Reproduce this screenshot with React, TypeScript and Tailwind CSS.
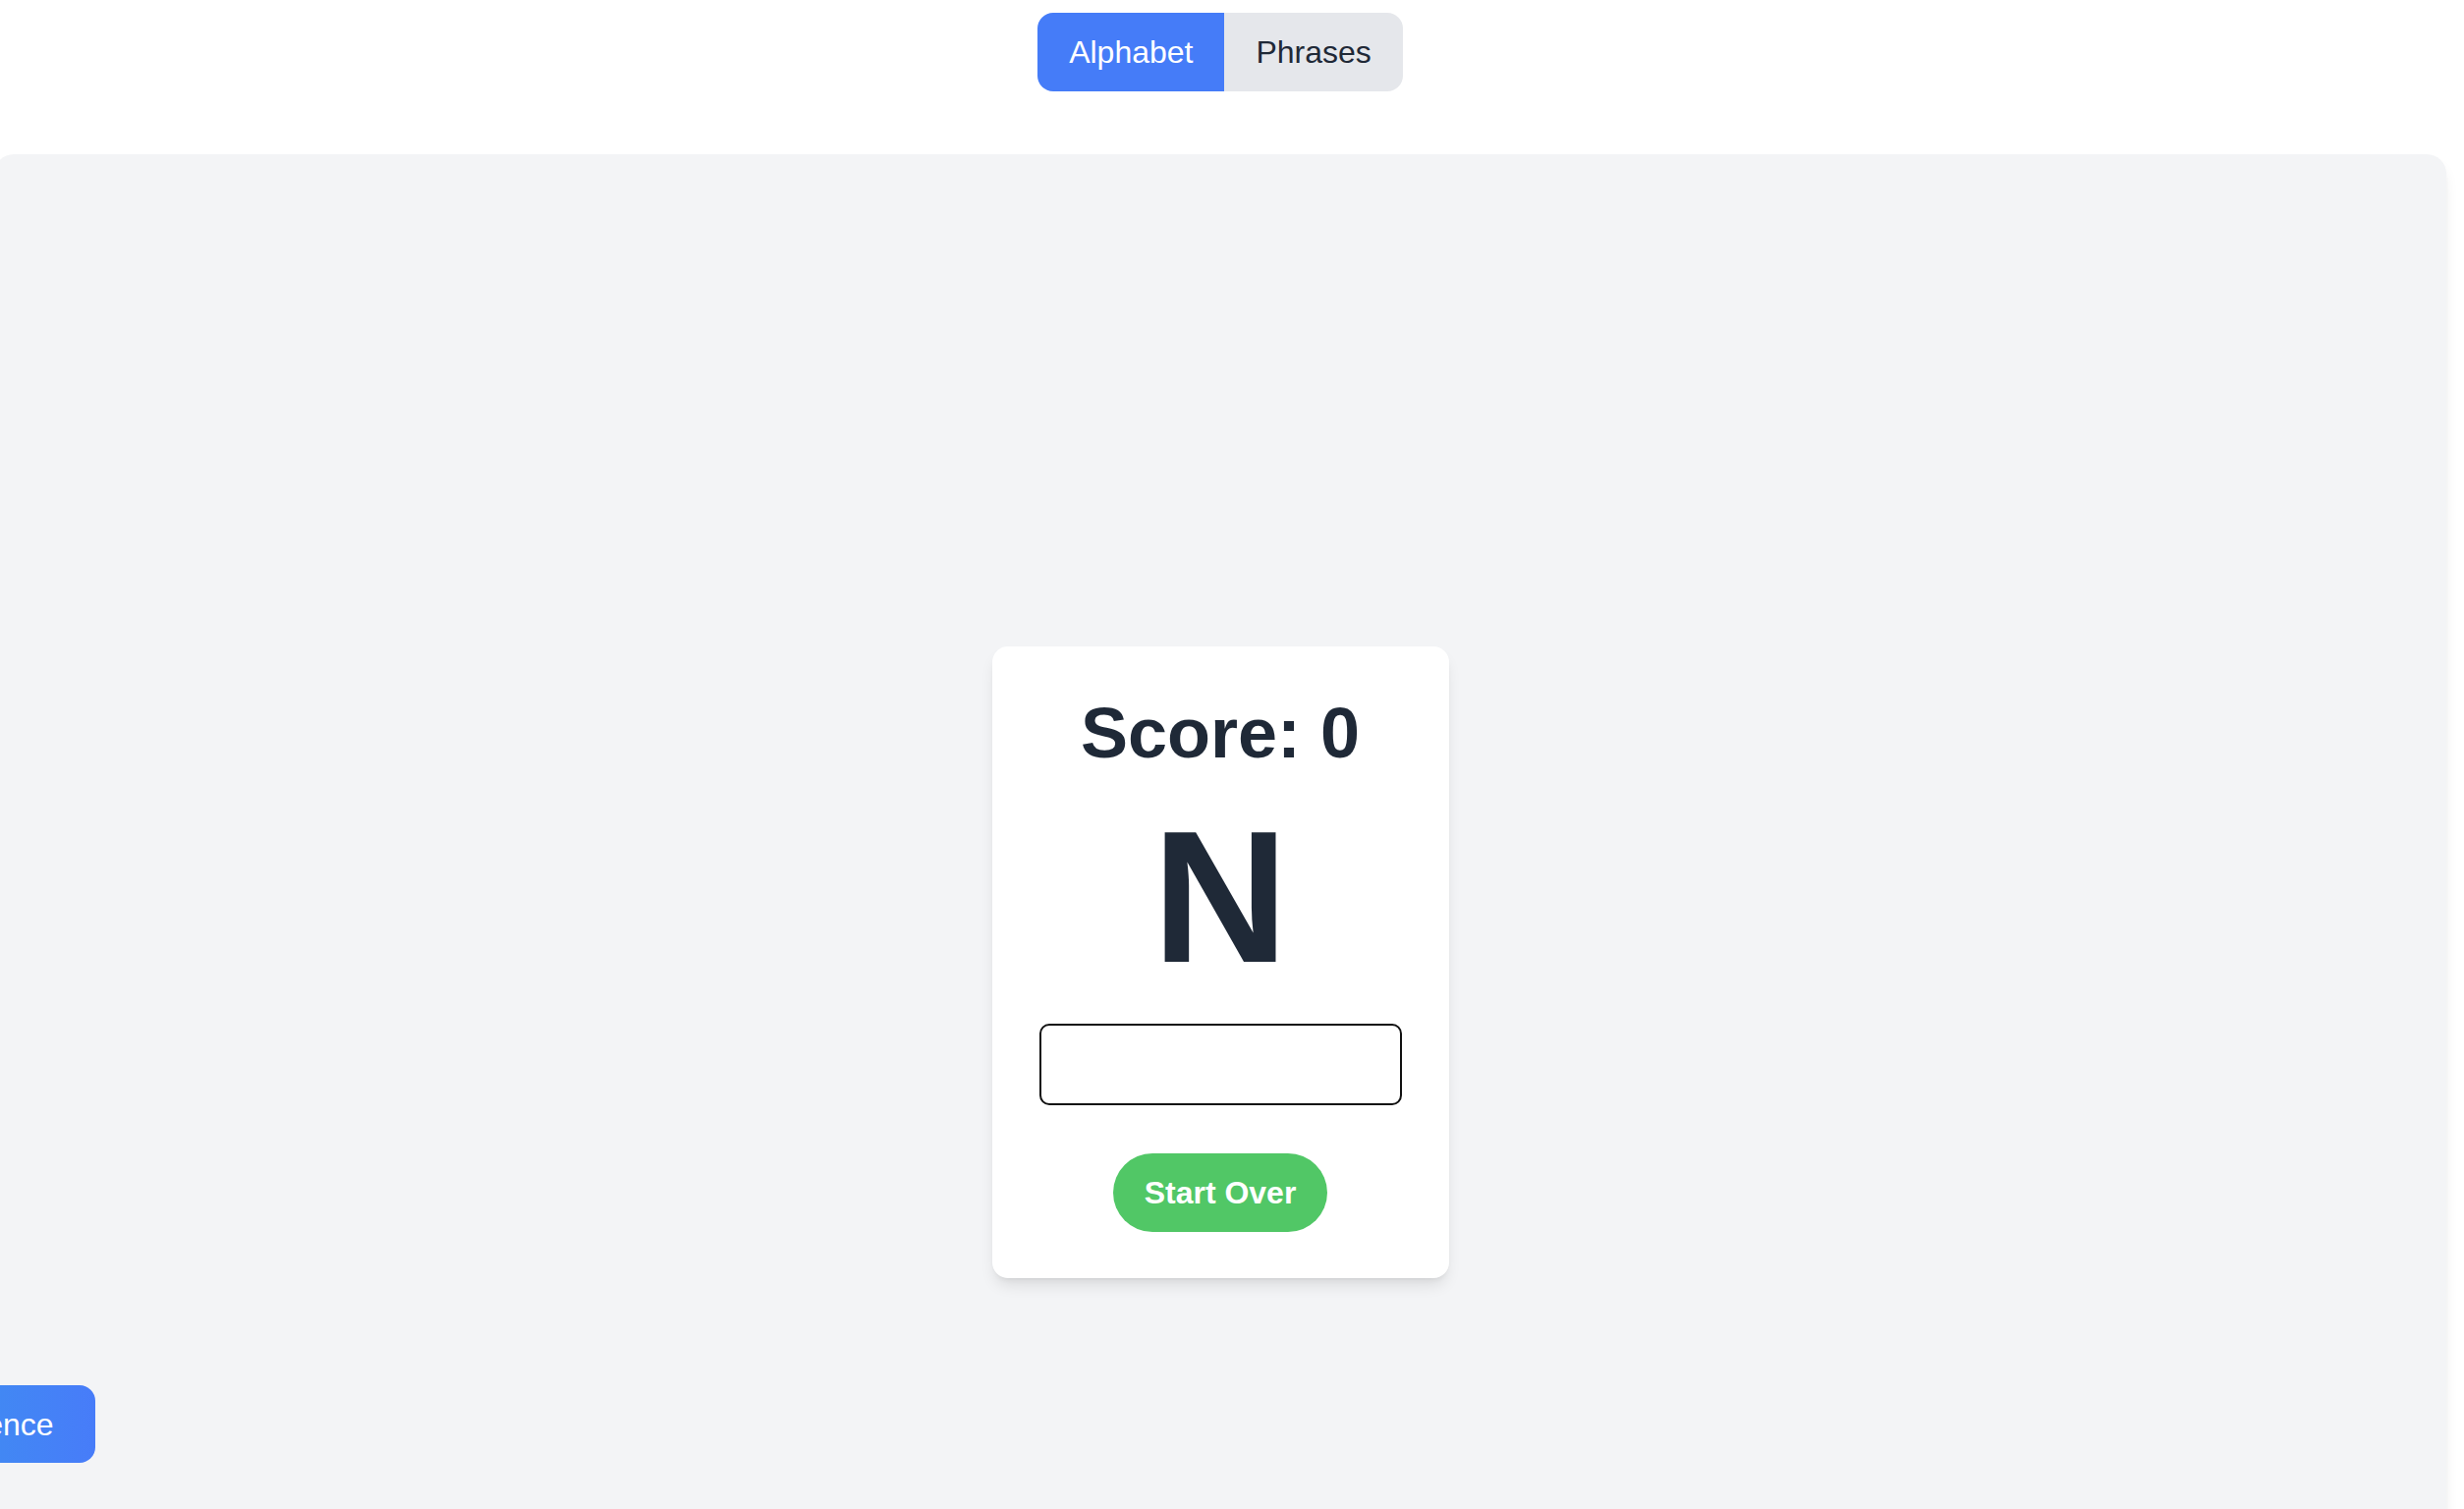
import { useState } from 'react';

const modes = ['Alphabet', 'Phrases'];

export default function App() {
    const [mode, setMode] = useState('Alphabet');
    const [answer, setAnswer] = useState('');

    return (
        <div
            className="relative h-[1536px] w-full overflow-hidden bg-white text-[#1f2937]"
            style={{ fontFamily: '"Liberation Sans", Arial, sans-serif' }}
        >
            <div className="w-[2484px]">
                {/* mode toggle */}
                <div className="flex justify-center pt-[13px]">
                    <div className="flex overflow-hidden rounded-2xl">
                        {modes.map((m) => (
                            <button
                                key={m}
                                onClick={() => setMode(m)}
                                className={
                                    mode === m
                                        ? 'h-[80px] px-8 text-[32px] leading-[48px] bg-[#457cf8] text-white'
                                        : 'h-[80px] px-8 text-[32px] leading-[48px] bg-[#e5e7eb] text-[#1f2937]'
                                }
                            >
                                {m}
                            </button>
                        ))}
                    </div>
                </div>

                {/* practice area */}
                <div className="ml-[-6px] mt-[64px] flex h-[1645px] w-[2496px] items-center justify-center rounded-[20px] bg-[#f3f4f6] shadow-lg">
                    <div className="flex w-[465px] flex-col items-center rounded-2xl bg-white px-12 pt-12 pb-[47px] shadow-lg">
                        <h2 className="text-[72px] font-bold leading-[80px]">Score: 0</h2>
                        <div className="mt-[31px] text-[192px] font-bold leading-[192px]">N</div>
                        <input
                            value={answer}
                            onChange={(e) => setAnswer(e.target.value)}
                            className="mt-[33px] h-[83px] w-full rounded-[10px] border-2 border-[#111] bg-white px-4 text-[32px] outline-none"
                        />
                        <button className="mt-[49px] h-[80px] rounded-full bg-[#51c766] px-8 text-[32px] font-bold leading-[48px] text-white">
                            Start Over
                        </button>
                    </div>
                </div>
            </div>

            {/* floating reference button, mostly off screen */}
            <button className="fixed bottom-[47px] left-[-135px] h-[79px] rounded-2xl bg-gradient-to-r from-[#3a96ec] to-[#477cf9] pl-[42px] pr-[42px] text-[32px] leading-[48px] text-white">
                Reference
            </button>
        </div>
    );
}
